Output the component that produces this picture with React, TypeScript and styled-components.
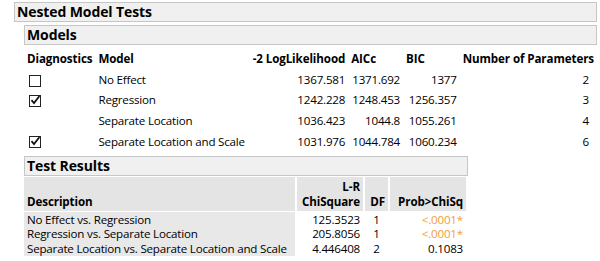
import React from 'react';
import styled, { createGlobalStyle } from 'styled-components';

const GlobalStyle = createGlobalStyle`
  html, body {
    margin: 0;
    padding: 0;
    background: #ffffff;
  }
  body {
    font-family: "Open Sans", "Noto Sans", sans-serif;
    color: #000000;
  }
`;

const Page = styled.div`
  padding: 2px 3px 0 14px;
  width: 600px;
  box-sizing: border-box;
`;

const Outline = styled.section`
  display: flex;
  flex-direction: column;
  align-items: flex-start;
`;

const TitleBar = styled.div<{ $width?: number }>`
  box-sizing: border-box;
  height: 20px;
  width: ${(p) => (p.$width ? `${p.$width}px` : '100%')};
  background: #f0f0f0;
  border: 1px solid #c6c6c6;
  padding-left: 2px;
  font-size: 14px;
  font-weight: 700;
  line-height: 18px;
  letter-spacing: -0.1px;
  white-space: nowrap;
`;

const Body = styled.div`
  display: flex;
  flex-direction: column;
  align-self: stretch;
  padding-left: 10px;
  padding-top: 3px;
`;

const ModelTable = styled.table`
  border-collapse: collapse;
  table-layout: fixed;
  font-size: 11.6px;
  margin-top: 2px;
  margin-bottom: 5px;
`;

const HeadCell = styled.th<{ $w: number; $align?: string }>`
  width: ${(p) => p.$w}px;
  padding: 0 3px;
  height: 22px;
  text-align: ${(p) => p.$align ?? 'left'};
  font-weight: 700;
  white-space: nowrap;
  letter-spacing: -0.1px;
`;

const Cell = styled.td<{ $align?: string; $padRight?: number }>`
  padding: 0 ${(p) => p.$padRight ?? 3}px 0 3px;
  height: 20.6px;
  text-align: ${(p) => p.$align ?? 'left'};
  white-space: nowrap;
  letter-spacing: -0.2px;
`;

const Check = styled.span`
  display: inline-block;
  box-sizing: border-box;
  width: 12px;
  height: 12px;
  margin-left: 2px;
  border: 1.5px solid #222222;
  vertical-align: middle;
  position: relative;
  svg {
    position: absolute;
    left: 0;
    top: -1px;
  }
`;

const ResultTable = styled.table`
  border-collapse: separate;
  border-spacing: 2px 0;
  margin-left: -2px;
  margin-top: 1px;
  font-size: 11.6px;
`;

const ResHead = styled.th<{ $w: number; $align?: string }>`
  width: ${(p) => p.$w}px;
  background: #e4e4e4;
  padding: 0 3px 2px;
  height: 32px;
  vertical-align: bottom;
  text-align: ${(p) => p.$align ?? 'right'};
  font-weight: 700;
  line-height: 15px;
  white-space: nowrap;
  letter-spacing: -0.1px;
`;

const ResCell = styled.td<{ $align?: string; $shade?: boolean; $tone?: string }>`
  background: ${(p) => (p.$shade ? '#e8e8e8' : '#ffffff')};
  padding: 0 3px;
  height: 14.5px;
  line-height: 14px;
  text-align: ${(p) => p.$align ?? 'right'};
  color: ${(p) => p.$tone ?? '#000000'};
  white-space: nowrap;
  letter-spacing: -0.2px;
`;

const GapRow = styled.tr`
  height: 1px;
`;

type Model = {
  check?: boolean;
  name: string;
  ll: string;
  aicc: string;
  bic: string;
  k: number;
};

const models: Model[] = [
  { check: false, name: 'No Effect', ll: '1367.581', aicc: '1371.692', bic: '1377', k: 2 },
  { check: true, name: 'Regression', ll: '1242.228', aicc: '1248.453', bic: '1256.357', k: 3 },
  { name: 'Separate Location', ll: '1036.423', aicc: '1044.8', bic: '1055.261', k: 4 },
  { check: true, name: 'Separate Location and Scale', ll: '1031.976', aicc: '1044.784', bic: '1060.234', k: 6 },
];

const tests = [
  { desc: 'No Effect vs. Regression', chi: '125.3523', df: 1, p: '<.0001*', sig: true },
  { desc: 'Regression vs. Separate Location', chi: '205.8056', df: 1, p: '<.0001*', sig: true },
  { desc: 'Separate Location vs. Separate Location and Scale', chi: '4.446408', df: 2, p: '0.1083', sig: false },
];

const CheckBox: React.FC<{ on: boolean }> = ({ on }) => (
  <Check>
    {on && (
      <svg width="10" height="10" viewBox="0 0 10 10">
        <path d="M1.5 5.2 L4 8 L9.5 1" stroke="#111111" strokeWidth="1.8" fill="none" />
      </svg>
    )}
  </Check>
);

const App: React.FC = () => {
  return (
    <Page>
      <GlobalStyle />
      <Outline>
        <TitleBar>Nested Model Tests</TitleBar>
        <Body>
          <Outline>
            <TitleBar>Models</TitleBar>
            <ModelTable>
              <thead>
                <tr>
                  <HeadCell $w={63}>Diagnostics</HeadCell>
                  <HeadCell $w={147}>Model</HeadCell>
                  <HeadCell $w={94} $align="right">-2 LogLikelihood</HeadCell>
                  <HeadCell $w={49}>AICc</HeadCell>
                  <HeadCell $w={51}>BIC</HeadCell>
                  <HeadCell $w={126}>Number of Parameters</HeadCell>
                </tr>
              </thead>
              <tbody>
                {models.map((m) => (
                  <tr key={m.name}>
                    <Cell>{m.check !== undefined && <CheckBox on={m.check} />}</Cell>
                    <Cell>{m.name}</Cell>
                    <Cell $align="right">{m.ll}</Cell>
                    <Cell $align="right">{m.aicc}</Cell>
                    <Cell $align="right">{m.bic}</Cell>
                    <Cell $align="right" $padRight={8}>
                      {m.k}
                    </Cell>
                  </tr>
                ))}
              </tbody>
            </ModelTable>
          </Outline>
          <Outline>
            <TitleBar $width={444}>Test Results</TitleBar>
            <ResultTable>
              <thead>
                <tr>
                  <ResHead $w={265} $align="left">Description</ResHead>
                  <ResHead $w={60}>
                    L-R
                    <br />
                    ChiSquare
                  </ResHead>
                  <ResHead $w={17}>DF</ResHead>
                  <ResHead $w={70}>Prob&gt;ChiSq</ResHead>
                </tr>
                <GapRow />
              </thead>
              <tbody>
                {tests.map((t) => (
                  <tr key={t.desc}>
                    <ResCell $align="left" $shade>
                      {t.desc}
                    </ResCell>
                    <ResCell>{t.chi}</ResCell>
                    <ResCell $align="center">{t.df}</ResCell>
                    <ResCell $tone={t.sig ? '#f39c3c' : undefined}>{t.p}</ResCell>
                  </tr>
                ))}
              </tbody>
            </ResultTable>
          </Outline>
        </Body>
      </Outline>
    </Page>
  );
};

export default App;
